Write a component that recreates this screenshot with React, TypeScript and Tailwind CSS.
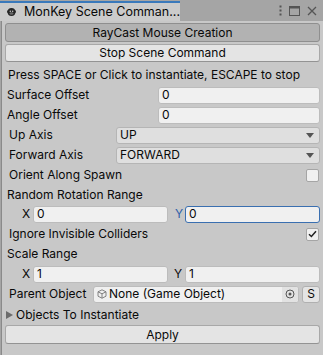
import React from "react";

const font = { fontFamily: "Inter, 'Noto Sans', sans-serif" };

function Monkey() {
  return (
    <svg width="12" height="12" viewBox="0 0 12 12">
      <circle cx="1.8" cy="5.5" r="1.8" fill="#2a2a2a" />
      <circle cx="10.2" cy="5.5" r="1.8" fill="#2a2a2a" />
      <circle cx="6" cy="6" r="5.2" fill="#262626" />
      <ellipse cx="6" cy="8" rx="2.6" ry="1.8" fill="#6a6a6a" />
      <circle cx="4.4" cy="5" r="0.9" fill="#d8d8d8" />
      <circle cx="7.6" cy="5" r="0.9" fill="#d8d8d8" />
    </svg>
  );
}

function TextField({ value, className = "", focused = false }: { value: string; className?: string; focused?: boolean }) {
  return (
    <div
      className={
        "h-[17px] rounded-[3px] border bg-[#f0f0f0] flex items-center pl-[3px] text-[12px] text-[#090909] " +
        (focused ? "border-[#3a6fb0]" : "border-[#bcbcbc]") +
        " " +
        className
      }
    >
      {value}
    </div>
  );
}

function Dropdown({ value }: { value: string }) {
  return (
    <div className="h-[17px] flex-1 rounded-[3px] border border-[#b5b5b5] bg-[#dfdfdf] flex items-center justify-between pl-[3px] pr-[5px] text-[12px] text-[#090909]">
      <span>{value}</span>
      <svg width="8" height="5" viewBox="0 0 8 5">
        <path d="M0 0 H8 L4 5 Z" fill="#555" />
      </svg>
    </div>
  );
}

function Checkbox({ checked }: { checked: boolean }) {
  return (
    <div className="w-[13px] h-[13px] rounded-[2px] border border-[#a5a5a5] bg-[#f0f0f0] flex items-center justify-center">
      {checked && (
        <svg width="9" height="8" viewBox="0 0 9 8">
          <path d="M1 4.2 L3.4 6.5 L8 1.2" stroke="#222" strokeWidth="1.5" fill="none" />
        </svg>
      )}
    </div>
  );
}

function Button({ label, pressed = false, h = "h-[18px]" }: { label: string; pressed?: boolean; h?: string }) {
  return (
    <div
      className={
        h +
        " rounded-[3px] border flex items-center justify-center text-[12px] text-[#090909] " +
        (pressed ? "bg-[#b2b2b2] border-[#8f8f8f]" : "bg-[#e4e4e4] border-[#a8a8a8] border-b-[#939393]")
      }
    >
      {label}
    </div>
  );
}

export default function App() {
  return (
    <div className="w-[323px] h-[355px] bg-[#a5a5a5] flex flex-col overflow-hidden" style={font}>
      {/* Tab bar */}
      <div className="h-[21px] flex items-end shrink-0">
        <div className="w-[180px] h-[20px] bg-[#cbcbcb] border-t-2 border-[#3a79bb] flex items-center pl-[7px] gap-[8px] whitespace-nowrap overflow-hidden">
          <Monkey />
          <span className="text-[12.5px] text-[#090909] leading-none whitespace-nowrap">MonKey Scene Comman...</span>
        </div>
        <div className="flex-1 h-[21px] flex items-center justify-end pr-[6px] gap-[7px]">
          <svg width="3" height="11" viewBox="0 0 3 11">
            <rect x="0.5" y="0.5" width="2" height="2" fill="#555" />
            <rect x="0.5" y="4.5" width="2" height="2" fill="#555" />
            <rect x="0.5" y="8.5" width="2" height="2" fill="#555" />
          </svg>
          <svg width="11" height="10" viewBox="0 0 11 10">
            <rect x="0.5" y="0.5" width="10" height="9" fill="none" stroke="#555" />
            <rect x="0.5" y="0.5" width="10" height="2" fill="#555" />
          </svg>
          <svg width="10" height="10" viewBox="0 0 10 10">
            <path d="M1 1 L9 9 M9 1 L1 9" stroke="#555" strokeWidth="1.3" />
          </svg>
        </div>
      </div>

      {/* Content */}
      <div className="flex-1 bg-[#c8c8c8] border-l border-[#8a8a8a] ml-[1px] flex flex-col pl-[3px] pr-[3px] pt-[2px] text-[12px] text-[#090909]">
        <Button label="RayCast Mouse Creation" pressed h="h-[19px]" />
        <div className="mt-[2px]">
          <Button label="Stop Scene Command" />
        </div>

        <div className="mt-[3px] h-[20px] flex items-center pl-[3px]">
          Press SPACE or Click to instantiate, ESCAPE to stop
        </div>

        <div className="h-[20px] flex items-center">
          <div className="w-[153px] pl-[2px]">Surface Offset</div>
          <TextField value="0" className="flex-1" />
        </div>
        <div className="h-[20px] flex items-center">
          <div className="w-[153px] pl-[2px]">Angle Offset</div>
          <TextField value="0" className="flex-1" />
        </div>
        <div className="h-[20px] flex items-center">
          <div className="w-[111px] pl-[4px]">Up Axis</div>
          <Dropdown value="UP" />
        </div>
        <div className="h-[20px] flex items-center">
          <div className="w-[111px] pl-[4px]">Forward Axis</div>
          <Dropdown value="FORWARD" />
        </div>
        <div className="h-[20px] flex items-center justify-between pl-[4px] pr-[1px]">
          <span>Orient Along Spawn</span>
          <Checkbox checked={false} />
        </div>
        <div className="h-[19px] flex items-center pl-[2px]">Random Rotation Range</div>
        <div className="h-[20px] flex items-center">
          <div className="w-[28px] pl-[17px]">X</div>
          <TextField value="0" className="w-[135px]" />
          <div className="w-[17px] pl-[7px] text-[#2d5fa8]">Y</div>
          <TextField value="0" className="flex-1" focused />
        </div>
        <div className="h-[20px] flex items-center justify-between pl-[4px] pr-[1px]">
          <span>Ignore Invisible Colliders</span>
          <Checkbox checked />
        </div>
        <div className="h-[20px] flex items-center pl-[2px]">Scale Range</div>
        <div className="h-[20px] flex items-center">
          <div className="w-[28px] pl-[17px]">X</div>
          <TextField value="1" className="w-[135px]" />
          <div className="w-[17px] pl-[6px]">Y</div>
          <TextField value="1" className="flex-1" />
        </div>
        <div className="h-[20px] flex items-center">
          <div className="w-[88px] pl-[4px]">Parent Object</div>
          <div className="w-[206px] h-[17px] rounded-[3px] border border-[#bcbcbc] bg-[#f0f0f0] flex items-center overflow-hidden">
            <div className="flex-1 flex items-center pl-[3px] gap-[2px]">
              <svg width="10" height="10" viewBox="0 0 10 10">
                <path d="M5 0.8 L9 2.8 V7.2 L5 9.2 L1 7.2 V2.8 Z M1 2.8 L5 4.8 L9 2.8 M5 4.8 V9.2" fill="none" stroke="#777" strokeWidth="0.9" />
              </svg>
              <span>None (Game Object)</span>
            </div>
            <div className="w-[16px] h-full bg-[#e2e2e2] flex items-center justify-center">
              <svg width="10" height="10" viewBox="0 0 10 10">
                <circle cx="5" cy="5" r="4" fill="none" stroke="#555" strokeWidth="1" />
                <circle cx="5" cy="5" r="1.5" fill="#555" />
              </svg>
            </div>
          </div>
          <div className="ml-[3px] flex-1 h-[17px] rounded-[3px] border border-[#b0b0b0] bg-[#e4e4e4] flex items-center justify-center">S</div>
        </div>
        <div className="h-[21px] flex items-center pl-[1px] gap-[3px]">
          <svg width="7" height="8" viewBox="0 0 7 8">
            <path d="M0 0 L7 4 L0 8 Z" fill="#6b6b6b" />
          </svg>
          <span>Objects To Instantiate</span>
        </div>
        <Button label="Apply" h="h-[19px]" />
      </div>
    </div>
  );
}
